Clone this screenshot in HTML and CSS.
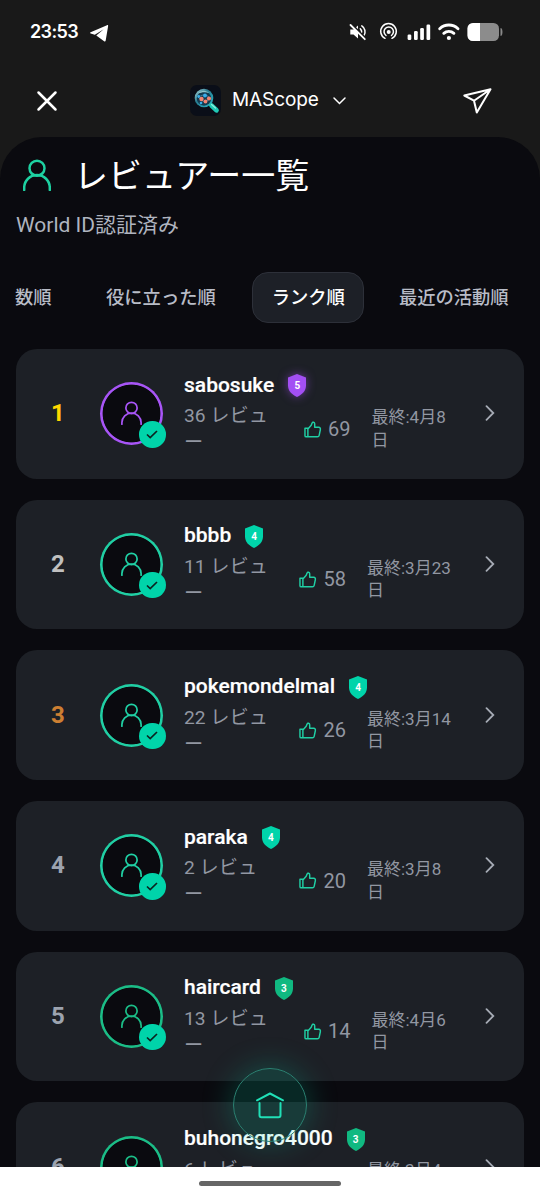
FILE: index.html
```html
<!DOCTYPE html>
<html lang="ja">
<head>
<meta charset="utf-8">
<title>MAScope</title>
<link rel="stylesheet" href="styles.css">
</head>
<body>
<svg class="defs" width="0" height="0">
  <symbol id="user" viewBox="0 0 28 32"><circle cx="14" cy="9.2" r="7.5"/><path d="M1.2 31v-2.2a12.8 12.8 0 0 1 25.6 0V31"/></symbol>
  <symbol id="thumb" viewBox="0 0 18 18"><path d="M1 7.500h3v8.800H2.200a1.200 1.200 0 0 1-1.200-1.200zM4 8.200l3.400-3.800L8.300 2c.4-1.300 2.700-1 2.700.9V6.500h4.200c1.200 0 1.900 1 1.700 2l-1.300 6.300c-.2.900-.9 1.500-1.800 1.500H4"/></symbol>
  <symbol id="shield" viewBox="0 0 18 23"><path d="M9 0l9 3.500v8c0 5-3.500 9-9 11.500C3.500 20.500 0 16.500 0 11.500v-8z"/></symbol>
  <symbol id="chev" viewBox="0 0 10 16"><path d="M1.500 1.200L8.300 8l-6.800 6.800"/></symbol>
  <symbol id="check" viewBox="0 0 12 9"><path d="M1 4.500l3.200 3L11 1"/></symbol>
</svg>
<div class="phone">
  <header class="top">
    <div class="status">
      <span class="time">23:53</span>
      <svg class="tg" viewBox="0 0 19 17"><path d="M.6 7.300L17 .2c.8-.3 1.300.2 1.100 1L15.700 15.600c-.2.900-.9 1.100-1.600.6L6.300 10.500l7.400-6.300L4.800 9.700.7 8.500c-.8-.3-.8-.9-.1-1.200z"/></svg>
      <svg class="sys" viewBox="0 0 156 24">
        <g fill="none" stroke="#fff" stroke-width="1.500" stroke-linecap="round">
          <path d="M11.300 8.800a4 4 0 0 1 .6 5M12.800 5.900a7 7 0 0 1 2.200 9.600"/>
          <path d="M1.300 9.500h3.200L9 5.500v13l-4.500-4H1.300z" fill="#fff" stroke="none"/>
          <path d="M3 4.300L17 18.300" stroke="#191919" stroke-width="1.800"/><path d="M1.500 5L15.800 19.200" stroke-width="1.800"/>
          <path d="M36 18.300a7.800 7.800 0 1 1 7 0M37 15.500a4.700 4.700 0 1 1 5.500 0"/>
        </g>
        <circle cx="39.700" cy="12" r="2" fill="#fff"/>
        <g fill="#fff"><rect x="58.600" y="14.500" width="3.700" height="5.500" rx="1.300"/><rect x="65" y="11" width="3.700" height="9" rx="1.300"/><rect x="71.200" y="8" width="3.700" height="12" rx="1.300"/><rect x="77.500" y="4.500" width="3.700" height="15.500" rx="1.300"/></g>
        <g fill="none" stroke="#fff" stroke-width="2.900" stroke-linecap="round"><path d="M90.700 8.700a13.300 13.300 0 0 1 18.300 0M94.800 13.300a7.600 7.600 0 0 1 10.100 0"/></g>
        <circle cx="99.900" cy="18" r="2.100" fill="#fff"/>
        <rect x="118.500" y="3" width="31.500" height="18" rx="5.500" fill="#8c8c8c"/>
        <path d="M131 3h-7a5.500 5.500 0 0 0-5.500 5.500v7a5.500 5.500 0 0 0 5.500 5.500H131z" fill="#fff"/>
        <path d="M152 8.500c1.300.5 1.300 6.500 0 7z" fill="#8c8c8c" stroke="#8c8c8c"/>
      </svg>
    </div>
    <div class="appbar">
      <svg class="close" viewBox="0 0 20 20"><path d="M1.500 1.500l17 17M18.500 1.500l-17 17"/></svg>
      <div class="app">
        <svg class="logo" viewBox="0 0 31 31">
          <defs><linearGradient id="lens" x1="0" y1="0" x2="1" y2="1"><stop offset="0" stop-color="#b5dce0"/><stop offset=".4" stop-color="#277c92"/><stop offset="1" stop-color="#2ab8c8"/></linearGradient></defs>
          <rect width="31" height="31" rx="7" fill="#0a0e18"/>
          <circle cx="14" cy="13" r="9.300" fill="url(#lens)"/><circle cx="14" cy="13.500" r="7.200" fill="#123a50"/>
          <path d="M8 8.500c3-4 9-3.500 11-.5-4-1.500-8-.5-11 .5z" fill="#8fc5cb"/>
          <path d="M8 12l5-2 5 1 2 3-5 3-4-2z" fill="none" stroke="#4b87a5" stroke-width=".8"/>
          <g fill="#f18472"><circle cx="11.500" cy="14" r="2.200"/><circle cx="19" cy="13.500" r="2.100"/><circle cx="15.500" cy="16.500" r="1.900"/></g>
          <g fill="#39aeea"><circle cx="15" cy="10.500" r="1.900"/><circle cx="8.700" cy="11.500" r="1.400"/><circle cx="11" cy="18" r="1.300"/></g>
          <path d="M21.500 20.500l5 4.800" stroke="#20c9b5" stroke-width="4.700" stroke-linecap="round"/><path d="M21.500 19.500l4 3.500" stroke="#8ef2df" stroke-width="1.200" stroke-linecap="round"/>
        </svg>
        <span class="appname">MAScope</span>
        <svg class="down" viewBox="0 0 13 8"><path d="M1 1l5.500 5.500L12 1"/></svg>
      </div>
      <svg class="send" viewBox="0 0 29 26"><path d="M1.300 7.500L27.500 1.200 13.800 24.500 11 12.700zM11 12.700L27.500 1.200"/></svg>
    </div>
  </header>
  <main class="sheet">
    <div class="title"><svg class="title-icon"><use href="#user"/></svg><h1>レビュアー一覧</h1></div>
    <p class="sub">World ID認証済み</p>
    <nav class="tabs">
      <span class="tab first">数順</span><span class="tab">役に立った順</span><span class="tab active">ランク順</span><span class="tab">最近の活動順</span>
    </nav>
    <section class="list">
      <article class="card gold t5">
        <b class="rank">1</b>
        <div class="avatar"><svg class="face"><use href="#user"/></svg><i class="ok"><svg><use href="#check"/></svg></i></div>
        <div class="info">
          <div class="name">sabosuke<span class="shield"><svg><use href="#shield"/></svg><em>5</em></span></div>
          <div class="stats wide"><span class="reviews">36 レビュ<br>ー</span><svg class="thumb"><use href="#thumb"/></svg><span class="likes">69</span><span class="date">最終:4月8<br>日</span></div>
        </div>
        <svg class="chev"><use href="#chev"/></svg>
      </article>
      <article class="card silver t4">
        <b class="rank">2</b>
        <div class="avatar"><svg class="face"><use href="#user"/></svg><i class="ok"><svg><use href="#check"/></svg></i></div>
        <div class="info">
          <div class="name">bbbb<span class="shield"><svg><use href="#shield"/></svg><em>4</em></span></div>
          <div class="stats"><span class="reviews">11 レビュ<br>ー</span><svg class="thumb"><use href="#thumb"/></svg><span class="likes">58</span><span class="date">最終:3月23<br>日</span></div>
        </div>
        <svg class="chev"><use href="#chev"/></svg>
      </article>
      <article class="card bronze t4">
        <b class="rank">3</b>
        <div class="avatar"><svg class="face"><use href="#user"/></svg><i class="ok"><svg><use href="#check"/></svg></i></div>
        <div class="info">
          <div class="name">pokemondelmal<span class="shield"><svg><use href="#shield"/></svg><em>4</em></span></div>
          <div class="stats"><span class="reviews">22 レビュ<br>ー</span><svg class="thumb"><use href="#thumb"/></svg><span class="likes">26</span><span class="date">最終:3月14<br>日</span></div>
        </div>
        <svg class="chev"><use href="#chev"/></svg>
      </article>
      <article class="card t4">
        <b class="rank">4</b>
        <div class="avatar"><svg class="face"><use href="#user"/></svg><i class="ok"><svg><use href="#check"/></svg></i></div>
        <div class="info">
          <div class="name">paraka<span class="shield"><svg><use href="#shield"/></svg><em>4</em></span></div>
          <div class="stats"><span class="reviews">2 レビュ<br>ー</span><svg class="thumb"><use href="#thumb"/></svg><span class="likes">20</span><span class="date">最終:3月8<br>日</span></div>
        </div>
        <svg class="chev"><use href="#chev"/></svg>
      </article>
      <article class="card t3">
        <b class="rank">5</b>
        <div class="avatar"><svg class="face"><use href="#user"/></svg><i class="ok"><svg><use href="#check"/></svg></i></div>
        <div class="info">
          <div class="name">haircard<span class="shield"><svg><use href="#shield"/></svg><em>3</em></span></div>
          <div class="stats wide"><span class="reviews">13 レビュ<br>ー</span><svg class="thumb"><use href="#thumb"/></svg><span class="likes">14</span><span class="date">最終:4月6<br>日</span></div>
        </div>
        <svg class="chev"><use href="#chev"/></svg>
      </article>
      <article class="card t3">
        <b class="rank">6</b>
        <div class="avatar"><svg class="face"><use href="#user"/></svg><i class="ok"><svg><use href="#check"/></svg></i></div>
        <div class="info">
          <div class="name">buhonegro4000<span class="shield"><svg><use href="#shield"/></svg><em>3</em></span></div>
          <div class="stats"><span class="reviews">6 レビュ<br>ー</span><svg class="thumb"><use href="#thumb"/></svg><span class="likes"></span><span class="date">最終:3月4<br>日</span></div>
        </div>
        <svg class="chev"><use href="#chev"/></svg>
      </article>
    </section>
    <a class="home"><svg viewBox="0 0 28 27"><path d="M1 8.300L14 1.500l13 6.800M3.500 11v12.300a2 2 0 0 0 2 2h17a2 2 0 0 0 2-2V11"/></svg></a>
  </main>
  <footer class="navbar"><span class="pill"></span></footer>
</div>
</body>
</html>
```
FILE: styles.css
```css
* { box-sizing: border-box; }
body { margin: 0; background: #191919; font-family: Roboto, "Noto Sans CJK JP", sans-serif; color: #fff; }
svg { display: block; fill: none; flex: none; overflow: visible; }
.defs { position: absolute; }
.phone { width: 540px; height: 1199px; display: flex; flex-direction: column; overflow: hidden; }
.top { height: 137px; flex: none; }
.status { height: 64px; display: flex; align-items: center; padding: 0 35px 0 30px; }
.time { font: 600 18px/24px Inter, sans-serif; width: 49px; white-space: nowrap; letter-spacing: -0.6px; }
.tg { width: 19px; height: 17px; fill: #fff; margin-left: 11px; margin-top: 2px; }
.sys { width: 156px; height: 24px; margin-left: auto; }
.appbar { height: 73px; display: flex; align-items: center; justify-content: space-between; padding: 0 48px 0 37px; }
.close { width: 20px; height: 20px; stroke: #fff; stroke-width: 2.500; stroke-linecap: round; }
.app { display: flex; align-items: center; margin-left: 16px; }
.logo { width: 31px; height: 31px; }
.appname { font: 400 19px/28px Inter, sans-serif; margin: -1px 0 0 11px; width: 87px; white-space: nowrap; letter-spacing: -0.1px; }
.down { width: 13px; height: 8px; margin-left: 14px; stroke: #fff; stroke-width: 1.500; stroke-linecap: round; }
.send { width: 29px; height: 26px; stroke: #fff; stroke-width: 2; stroke-linejoin: round; }

.sheet { position: relative; height: 1030px; flex: none; background: #0a0a0f; border-radius: 42px 42px 0 0; overflow: hidden; }
.title { display: flex; align-items: center; height: 52px; padding: 24px 0 0 23px; margin-bottom: 16px; }
.title-icon { width: 28px; height: 32px; stroke: #1dd1a1; stroke-width: 2.500; stroke-linecap: round; }
h1 { margin: 2px 0 0 23px; font-size: 34px; font-weight: 400; line-height: 48px; white-space: nowrap; }
.sub { margin: 0; padding: 2px 0 0 16px; font-size: 21px; line-height: 36px; color: #afb4bf; }
.tabs { display: flex; align-items: center; height: 51px; margin-top: 29px; gap: 14px; font-size: 18.300px; font-weight: 500; color: #b8bcc7; white-space: nowrap; }
.tab { padding: 0 20px; line-height: 49px; border: 1px solid transparent; border-radius: 16px; }
.tab.first { padding-left: 14px; margin-right: -1.500px; }
.tab.active { padding: 0 18px 0 19px; margin-left: 1px; background: #1d2027; border-color: #2d3039; color: #fff; }
.list { display: flex; flex-direction: column; gap: 21px; padding: 26px 16px 0; }
.card { height: 129.650px; flex: none; display: flex; align-items: center; background: #1d2026; border-radius: 21px; padding: 0 29px 0 21px; --rank: #9ca3af; --tier: #00d4aa; --shield: #00d4aa; }
.gold { --rank: #ffd700; } .silver { --rank: #c0c0c0; } .bronze { --rank: #cd7f32; }
.t5 { --tier: #a855f7; --shield: #a34ff4; } .t4 { --tier: #20cfa4; } .t3 { --tier: #1bbd87; --shield: #10b981; }
.rank { width: 42px; text-align: center; font-size: 24px; line-height: 32px; font-weight: 700; color: var(--rank); margin-top: -1px; }
.avatar { position: relative; width: 63px; height: 63px; flex: none; margin: 0 21px; border-radius: 50%; background: radial-gradient(circle closest-side, #0a0a0f 28.500px, var(--tier) 29.300px); display: flex; align-items: center; justify-content: center; }
.face { width: 21px; height: 24px; stroke: var(--tier); stroke-width: 2.300; stroke-linecap: round; margin-top: -1px; }
.ok { position: absolute; right: -2.500px; bottom: -2.500px; width: 26.500px; height: 26.500px; border-radius: 50%; background: #00d4aa; display: grid; place-items: center; }
.ok svg { width: 12px; height: 9px; stroke: #0a2420; stroke-width: 1.700; }
.info { flex: 1; white-space: nowrap; }
.name { display: flex; align-items: center; height: 27px; font-size: 21px; font-weight: 500; -webkit-text-stroke: 0.2px #fff; margin-bottom: 4px; }
.shield { position: relative; width: 18px; height: 23px; margin: 2px 0 0 14px; display: grid; place-items: center; -webkit-text-stroke: 0; }
.shield svg { position: absolute; left: 0; top: 0; width: 18px; height: 23px; fill: var(--shield); }
.t5 .shield svg { filter: drop-shadow(0 0 5px #a34ff488); }
.shield em { position: relative; font: 700 10px/23px Roboto, sans-serif; color: #fff; }
.stats { display: flex; align-items: center; height: 54px; color: #9297a2; }
.reviews { width: 115px; font-size: 19.200px; line-height: 27px; }
.wide .reviews { width: 119.500px; }
.thumb { width: 17.500px; height: 17.500px; stroke: #20cfa4; stroke-width: 1.500; stroke-linejoin: round; }
.likes { width: 24px; margin-left: 7px; font-size: 20px; line-height: 27px; }
.date { margin-left: 19.500px; font-size: 17px; line-height: 22.600px; margin-top: -1px; }
.chev { width: 10px; height: 16px; stroke: #a6abb5; stroke-width: 1.800; stroke-linecap: round; margin-top: -1px; }

.home { position: absolute; left: 233px; top: 931px; width: 74px; height: 74px; border-radius: 50%; border: 1.500px solid #2a8272; background: rgba(0, 212, 170, .15); box-shadow: 0 0 32px rgba(0, 212, 170, .28); display: grid; place-items: center; }
.home svg { width: 28px; height: 27px; stroke: #20dfb6; stroke-width: 2; stroke-linecap: round; stroke-linejoin: round; }
.navbar { height: 32px; flex: none; background: #fff; display: flex; justify-content: center; align-items: center; }
.pill { width: 142px; height: 5px; border-radius: 3px; background: #666; }
```
